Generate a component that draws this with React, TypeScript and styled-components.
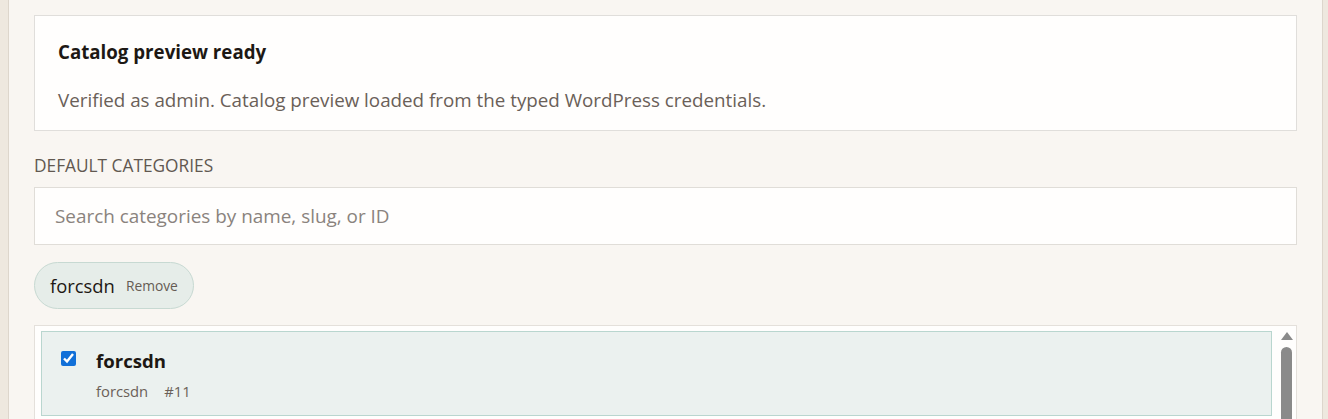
import React from "react";
import styled, { createGlobalStyle } from "styled-components";

const Global = createGlobalStyle`
  html, body { margin: 0; padding: 0; }
  body {
    background: #eee8df;
    font-family: "Open Sans", "Noto Sans", sans-serif;
    overflow: hidden;
    height: 419px;
  }
`;

const Shell = styled.div`
  display: flex;
  padding: 0 5px 0 8px;
  height: 419px;
  box-sizing: border-box;
`;

const Panel = styled.main`
  flex: 1;
  background: #f9f6f2;
  border-left: 1px solid #ddd6cc;
  border-right: 1px solid #ddd6cc;
  padding: 15px 25px 0 25px;
  display: flex;
  flex-direction: column;
  overflow: hidden;
  & > * { flex-shrink: 0; }
`;

const Notice = styled.section`
  background: #fffefd;
  border: 1px solid #e0dedb;
  padding: 23px 23px 17px;
`;

const NoticeTitle = styled.h3`
  margin: 0;
  font-size: 18.7px;
  font-weight: 700;
  color: #1d1814;
  line-height: 26px;
`;

const NoticeText = styled.p`
  margin: 22px 0 0;
  font-size: 18.8px;
  color: #6a6058;
  line-height: 26px;
`;

const FieldLabel = styled.div`
  margin-top: 24px;
  font-size: 17.3px;
  color: #615850;
  line-height: 22px;
`;

const SearchInput = styled.input`
  margin-top: 10px;
  height: 58px;
  box-sizing: border-box;
  border: 1px solid #e0ddd8;
  background: #fffefd;
  padding: 0 20px;
  font-family: inherit;
  font-size: 18.9px;
  color: #2a2420;
  outline: none;
  &::placeholder { color: #8a837d; }
`;

const ChipRow = styled.div`
  display: flex;
  margin-top: 17px;
`;

const Chip = styled.span`
  display: inline-flex;
  align-items: center;
  gap: 11px;
  height: 47px;
  box-sizing: border-box;
  padding: 0 15px;
  border-radius: 999px;
  background: #e6ede9;
  border: 1px solid #c7d9d2;
`;

const ChipName = styled.span`
  font-size: 18.4px;
  color: #1d1814;
`;

const ChipRemove = styled.button`
  border: none;
  background: none;
  padding: 0;
  font-family: inherit;
  font-size: 13.8px;
  color: #655c54;
  cursor: pointer;
`;

const ListBox = styled.div`
  margin-top: 16px;
  display: flex;
  gap: 8px;
  border: 1px solid #e4e0db;
  background: #fffefd;
  padding: 5px 3px 0 6px;
  height: 200px;
`;

const Items = styled.div`
  flex: 1;
  display: flex;
  flex-direction: column;
`;

const Item = styled.label<{ $selected?: boolean }>`
  display: flex;
  gap: 20px;
  padding: 16px 20px 14px 19px;
  background: ${(p) => (p.$selected ? "#ebf1ef" : "#fffefd")};
  border: 1px solid ${(p) => (p.$selected ? "#b9d6cf" : "#e4e0db")};
`;

const Check = styled.input`
  width: 15px;
  height: 15px;
  margin: 3px 0 0 0;
  accent-color: #1170d8;
`;

const ItemBody = styled.div`
  display: flex;
  flex-direction: column;
  gap: 7px;
`;

const ItemTitle = styled.span`
  font-size: 18.6px;
  font-weight: 700;
  color: #1d1814;
  line-height: 26px;
`;

const ItemMeta = styled.span`
  display: flex;
  gap: 16px;
  font-size: 14.8px;
  color: #6a6058;
  line-height: 20px;
`;

const ScrollTrack = styled.div`
  width: 13px;
  display: flex;
  flex-direction: column;
  align-items: center;
  gap: 7px;
  padding-top: 1px;
`;

const ArrowUp = styled.span`
  width: 0;
  height: 0;
  border-left: 6.5px solid transparent;
  border-right: 6.5px solid transparent;
  border-bottom: 8px solid #8a8a8a;
`;

const Thumb = styled.span`
  width: 11px;
  flex: 1;
  background: #8a8a8a;
  border-radius: 6px 6px 0 0;
`;

export default function App() {
  return (
    <>
      <Global />
      <Shell>
        <Panel>
          <Notice>
            <NoticeTitle>Catalog preview ready</NoticeTitle>
            <NoticeText>
              Verified as admin. Catalog preview loaded from the typed WordPress credentials.
            </NoticeText>
          </Notice>
          <FieldLabel>DEFAULT CATEGORIES</FieldLabel>
          <SearchInput placeholder="Search categories by name, slug, or ID" />
          <ChipRow>
            <Chip>
              <ChipName>forcsdn</ChipName>
              <ChipRemove type="button">Remove</ChipRemove>
            </Chip>
          </ChipRow>
          <ListBox>
            <Items>
              <Item $selected>
                <Check type="checkbox" defaultChecked />
                <ItemBody>
                  <ItemTitle>forcsdn</ItemTitle>
                  <ItemMeta>
                    <span>forcsdn</span>
                    <span>#11</span>
                  </ItemMeta>
                </ItemBody>
              </Item>
            </Items>
            <ScrollTrack>
              <ArrowUp />
              <Thumb />
            </ScrollTrack>
          </ListBox>
        </Panel>
      </Shell>
    </>
  );
}
